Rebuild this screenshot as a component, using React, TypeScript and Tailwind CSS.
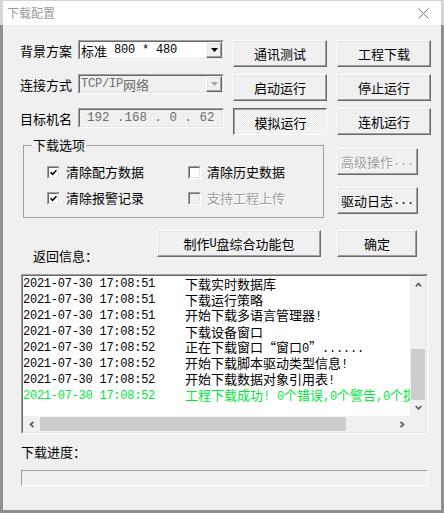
import React from "react";

const cjk = "font-['Noto_Sans_CJK_SC','Noto_Sans',sans-serif]";
const mono = "font-['Liberation_Mono','Noto_Sans_CJK_SC',monospace]";

const raised =
  "bg-[#f0f0f0] border border-t-white border-l-white border-r-[#696969] border-b-[#696969] shadow-[inset_-1px_-1px_0_#a0a0a0,inset_1px_1px_0_#e3e3e3]";

const logs: [string, string][] = [
  ["2021-07-30 17:08:51", "下载实时数据库"],
  ["2021-07-30 17:08:51", "下载运行策略"],
  ["2021-07-30 17:08:51", "开始下载多语言管理器!"],
  ["2021-07-30 17:08:52", "下载设备窗口"],
  ["2021-07-30 17:08:52", "正在下载窗口“窗口0”......"],
  ["2021-07-30 17:08:52", "开始下载脚本驱动类型信息!"],
  ["2021-07-30 17:08:52", "开始下载数据对象引用表!"],
  ["2021-07-30 17:08:52", "工程下载成功! 0个错误,0个警告,0个提示信息"],
];

// half-width ASCII runs in a mono face, the rest in the CJK face (like SimSun)
function T({ s }: { s: string }) {
  const parts = s.match(/[\x20-\x7e]+|[^\x20-\x7e]+/g) || [];
  return (
    <>
      {parts.map((p, i) =>
        /^[\x20-\x7e]/.test(p) ? (
          <span key={i} className={`${mono} whitespace-pre text-[12px] tracking-[-0.2px]`}>
            {p}
          </span>
        ) : (
          <span key={i}>{p}</span>
        )
      )}
    </>
  );
}

function Sunken({
  className = "",
  inner = "",
  children,
}: {
  className?: string;
  inner?: string;
  children?: React.ReactNode;
}) {
  return (
    <div
      className={`border border-t-[#a0a0a0] border-l-[#a0a0a0] border-r-white border-b-white ${className}`}
    >
      <div
        className={`h-full w-full border border-t-[#696969] border-l-[#696969] border-r-[#e3e3e3] border-b-[#e3e3e3] ${inner}`}
      >
        {children}
      </div>
    </div>
  );
}

function Btn({
  children,
  className = "",
  disabled = false,
}: {
  children: string;
  className?: string;
  disabled?: boolean;
}) {
  return (
    <button
      type="button"
      className={`${raised} flex h-[27px] items-center justify-center text-[13px] leading-none ${
        disabled ? "text-[#a0a0a0] [text-shadow:1px_1px_0_#ffffff]" : "text-black"
      } ${className}`}
    >
      <T s={children} />
    </button>
  );
}

function DropBtn({ disabled = false }: { disabled?: boolean }) {
  return (
    <div className={`${raised} flex h-full w-[16px] items-center justify-center`}>
      <svg width="7" height="4" viewBox="0 0 7 4">
        <path d="M0 0h7L3.5 4z" fill={disabled ? "#a0a0a0" : "#000"} />
      </svg>
    </div>
  );
}

function Chevron({ dir }: { dir: "up" | "down" | "left" | "right" }) {
  const pts = {
    up: "0.8,4.5 3.5,1.5 6.2,4.5",
    down: "0.8,1 3.5,4 6.2,1",
    left: "4.5,0.8 1.5,3.5 4.5,6.2",
    right: "1.5,0.8 4.5,3.5 1.5,6.2",
  }[dir];
  const vertical = dir === "up" || dir === "down";
  return (
    <svg
      width={vertical ? 7 : 6}
      height={vertical ? 6 : 7}
      viewBox={vertical ? "0 0 7 6" : "0 0 6 7"}
    >
      <polyline points={pts} fill="none" stroke="#606060" strokeWidth="1.8" />
    </svg>
  );
}

function Check({ checked, disabled = false }: { checked: boolean; disabled?: boolean }) {
  return (
    <Sunken
      className="h-[13px] w-[13px] shrink-0"
      inner={`flex items-center justify-center ${disabled ? "bg-[#f0f0f0]" : "bg-white"}`}
    >
      {checked && (
        <svg width="7" height="7" viewBox="0 0 7 7">
          <polyline points="0.5,3.2 2.6,5.3 6.5,1.2" fill="none" stroke="#000" strokeWidth="1.6" />
        </svg>
      )}
    </Sunken>
  );
}

function Option({
  label,
  checked,
  disabled = false,
  className = "",
}: {
  label: string;
  checked: boolean;
  disabled?: boolean;
  className?: string;
}) {
  return (
    <div className={`flex h-[16px] items-center gap-[6px] ${className}`}>
      <Check checked={checked} disabled={disabled} />
      <span
        className={`leading-[16px] ${
          disabled ? "text-[#a0a0a0] [text-shadow:1px_1px_0_#ffffff]" : "text-black"
        }`}
      >
        {label}
      </span>
    </div>
  );
}

function Row({
  label,
  field,
  b1,
  b2,
  b1Pressed = false,
}: {
  label: string;
  field: React.ReactNode;
  b1: string;
  b2: string;
  b1Pressed?: boolean;
}) {
  return (
    <div className="flex h-[27px] items-start">
      <div className="flex h-[20px] w-[58px] items-center leading-none">{label}</div>
      {field}
      {b1Pressed ? (
        <button
          type="button"
          className="ml-[9px] flex h-[27px] w-[94px] items-center justify-center border border-t-[#696969] border-l-[#696969] border-r-white border-b-white bg-[repeating-conic-gradient(#ffffff_0%_25%,#e6e6e6_0%_50%)] bg-[length:2px_2px] pl-[1px] pt-[1px] text-[13px] leading-none shadow-[inset_1px_1px_0_#a0a0a0]"
        >
          {b1}
        </button>
      ) : (
        <Btn className="ml-[9px] w-[94px]">{b1}</Btn>
      )}
      <Btn className="ml-[10px] w-[94px]">{b2}</Btn>
    </div>
  );
}

export default function App() {
  return (
    <div className={`flex h-[513px] w-[444px] flex-col bg-[#f0f0f0] text-[13px] text-black ${cjk}`}>
      {/* title bar */}
      <div className="flex h-[25px] shrink-0 items-center justify-between border-x-[3px] border-t border-[#d6d6d6] bg-white pl-[4px] pr-[12px]">
        <span className="text-[12px] leading-none text-[#9c9c9c]">下载配置</span>
        <svg width="11" height="11" viewBox="0 0 11 11">
          <path d="M0.5 0.5L10.5 10.5M10.5 0.5L0.5 10.5" stroke="#777" strokeWidth="1" />
        </svg>
      </div>

      {/* client */}
      <div className="flex flex-1 flex-col border-x-[3px] border-b-[3px] border-[#8f8f8f] pt-[15px]">
        <div className="flex flex-col gap-[7px] pl-[17px]">
          <Row
            label="背景方案"
            b1="通讯测试"
            b2="工程下载"
            field={
              <Sunken className="h-[20px] w-[146px]" inner="flex bg-white">
                <div className="flex flex-1 items-center pl-[1px] leading-none">
                  <T s="标准 800 * 480" />
                </div>
                <DropBtn />
              </Sunken>
            }
          />
          <Row
            label="连接方式"
            b1="启动运行"
            b2="停止运行"
            field={
              <Sunken className="h-[20px] w-[146px]" inner="flex bg-[#f0f0f0]">
                <div className="flex flex-1 items-center pl-[1px] leading-none text-[#6d6d6d]">
                  <T s="TCP/IP网络" />
                </div>
                <DropBtn disabled />
              </Sunken>
            }
          />
          <Row
            label="目标机名"
            b1="模拟运行"
            b2="连机运行"
            b1Pressed
            field={
              <Sunken className="h-[20px] w-[146px]" inner="flex items-center bg-[#f0f0f0] pl-[7px]">
                <span className={`${mono} whitespace-pre text-[12.5px] leading-none text-[#6d6d6d]`}>
                  192 .168 . 0 . 62
                </span>
              </Sunken>
            }
          />
        </div>

        {/* options + side buttons */}
        <div className="mt-[3px] flex pl-[20px]">
          <fieldset className="h-[80px] w-[301px] border border-[#a0a0a0]">
            <legend className="ml-[8px] px-[1px] leading-[14px]">下载选项</legend>
            <div className="mt-[12px] flex flex-col gap-[10px] pl-[23px]">
              <div className="flex">
                <Option className="w-[141px]" label="清除配方数据" checked />
                <Option label="清除历史数据" checked={false} />
              </div>
              <div className="flex">
                <Option className="w-[141px]" label="清除报警记录" checked />
                <Option label="支持工程上传" checked={false} disabled />
              </div>
            </div>
          </fieldset>
          <div className="ml-[13px] flex w-[81px] flex-col gap-[12px] pt-[10px]">
            <Btn className="w-full" disabled>
              高级操作...
            </Btn>
            <Btn className="w-full">驱动日志...</Btn>
          </div>
        </div>

        <div className="mt-[12px] flex items-start pl-[30px]">
          <div className="mt-[18px] w-[124px] leading-[16px]">返回信息：</div>
          <Btn className="w-[164px]">制作U盘综合功能包</Btn>
          <Btn className="ml-[16px] w-[80px]">确定</Btn>
        </div>

        {/* log list */}
        <Sunken className="ml-[18px] mt-[10px] h-[160px] w-[407px]" inner="flex flex-col bg-white">
          <div className="flex min-h-0 flex-1">
            <div className="min-w-0 flex-1 overflow-hidden">
              {logs.map(([t, m], i) => (
                <div
                  key={i}
                  className={`flex h-[16px] items-center whitespace-nowrap leading-[16px] ${
                    i === logs.length - 1 ? "text-[#00e83c]" : "text-black"
                  }`}
                >
                  <span className={`${mono} w-[162px] shrink-0 text-[12px] tracking-[-0.25px]`}>{t}</span>
                  <span>
                    <T s={m} />
                  </span>
                </div>
              ))}
            </div>
            <div className="flex w-[16px] flex-col bg-[#f0f0f0]">
              <div className="flex h-[17px] items-center justify-center">
                <Chevron dir="up" />
              </div>
              <div className="flex-1" />
              <div className="mx-[1px] h-[51px] bg-[#cdcdcd]" />
              <div className="flex h-[16px] items-center justify-center">
                <Chevron dir="down" />
              </div>
            </div>
          </div>
          <div className="flex h-[16px] bg-[#f0f0f0]">
            <div className="flex w-[17px] items-center justify-center">
              <Chevron dir="left" />
            </div>
            <div className="my-[1px] w-[306px] bg-[#cdcdcd]" />
            <div className="flex-1" />
            <div className="flex w-[17px] items-center justify-center">
              <Chevron dir="right" />
            </div>
            <div className="w-[16px]" />
          </div>
        </Sunken>

        <div className="mt-[10px] pl-[18px] leading-[16px]">下载进度：</div>
        <div className="ml-[18px] mt-[10px] h-[16px] w-[407px] border border-t-[#a0a0a0] border-l-[#a0a0a0] border-r-white border-b-white" />
      </div>
    </div>
  );
}
